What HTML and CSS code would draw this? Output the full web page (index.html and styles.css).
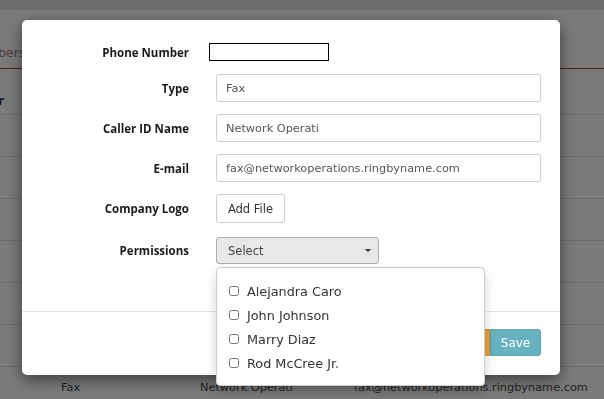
FILE: index.html
```html
<!DOCTYPE html>
<html lang="en">
  <head>
    <meta charset="UTF-8" />
    <title>Edit Number</title>
    <link rel="stylesheet" href="styles.css">
  </head>
  <body>
    <div class="page">
      <div class="topbar"></div>
      <div class="tabs"><span class="tab">bers</span></div>
      <div class="thead"><span class="th">r</span></div>
      <div class="row"></div>
      <div class="row"></div>
      <div class="row"></div>
      <div class="row"></div>
      <div class="row"></div>
      <div class="row"></div>
      <div class="row last">
        <span class="cell c1">Fax</span>
        <span class="cell c2">Network Operati</span>
        <span class="cell c3">fax@networkoperations.ringbyname.com</span>
      </div>
    </div>

    <div class="overlay"></div>

    <div class="modal">
      <div class="modal-body">
        <div class="field phone">
          <label class="label">Phone Number</label>
          <input class="phone-input" type="text">
        </div>
        <div class="field">
          <label class="label">Type</label>
          <input class="input" type="text" value="Fax">
        </div>
        <div class="field">
          <label class="label">Caller ID Name</label>
          <input class="input" type="text" value="Network Operati">
        </div>
        <div class="field">
          <label class="label">E-mail</label>
          <input class="input" type="text" value="fax@networkoperations.ringbyname.com">
        </div>
        <div class="field logo">
          <label class="label">Company Logo</label>
          <button class="btn-file">Add File</button>
        </div>
        <div class="field">
          <label class="label">Permissions</label>
          <div class="select-wrap">
            <button class="select">Select <span class="caret"></span></button>
            <ul class="dropdown">
              <li><input type="checkbox"> Alejandra Caro</li>
              <li><input type="checkbox"> John Johnson</li>
              <li><input type="checkbox"> Marry Diaz</li>
              <li><input type="checkbox"> Rod McCree Jr.</li>
            </ul>
          </div>
        </div>
      </div>
      <div class="modal-footer">
        <button class="btn cancel">Cancel</button>
        <button class="btn save">Save</button>
      </div>
    </div>
  </body>
</html>
```

FILE: styles.css
```css
body {
  margin: 0;
  font-family: "DejaVu Sans", sans-serif;
  background-color: #fff;
  overflow: hidden;
}
.page {
  width: 604px;
  height: 399px;
}
.topbar {
  height: 10px;
  background-color: #e4e4e4;
}
.tabs {
  height: 58px;
  border-bottom: 1px solid #b03a2e;
  font-size: 12.5px;
  color: #9a8282;
  line-height: 86px;
}
.tab {
  margin-left: -2px;
}
.thead {
  height: 45px;
  border-bottom: 1px solid #ddd;
  font-size: 12px;
  font-weight: bold;
  color: #333;
  line-height: 64px;
}
.th {
  margin-left: -2px;
}
.row {
  height: 41px;
  border-bottom: 1px solid #ddd;
}
.row.last {
  border-bottom: none;
  position: relative;
  font-size: 11.3px;
  color: #444;
  line-height: 42px;
}
.cell {
  position: absolute;
  top: 0;
}
.c1 { left: 61px; }
.c2 { left: 200px; }
.c3 { left: 354px; }

.overlay {
  position: fixed;
  inset: 0;
  background-color: rgba(0, 0, 0, 0.52);
}

.modal {
  position: fixed;
  left: 22px;
  top: 20px;
  width: 538px;
  height: 355px;
  background-color: #fff;
  border-radius: 5px;
  box-shadow: 0 5px 15px rgba(0, 0, 0, 0.5);
}
.modal-body {
  padding: 23px 19px 0 0;
  height: 268px;
  border-bottom: 1px solid #e5e5e5;
}
.field {
  display: flex;
  align-items: center;
  margin-bottom: 12px;
}
.field.phone {
  margin-bottom: 13px;
}
.field.logo {
  margin-bottom: 14px;
}
.label {
  width: 167px;
  text-align: right;
  font-family: "Open Sans", sans-serif;
  font-size: 11.5px;
  font-weight: bold;
  color: #1a1a1a;
}
.phone-input {
  margin-left: 20px;
  width: 116px;
  height: 14px;
  border: 1px solid #000;
  padding: 1px;
}
.input {
  margin-left: 27px;
  flex: 1;
  height: 28px;
  box-sizing: border-box;
  border: 1px solid #ccc;
  border-radius: 3px;
  padding: 0 9px;
  font-family: inherit;
  font-size: 11.3px;
  color: #555;
}
.btn-file {
  margin-left: 27px;
  height: 29px;
  width: 69px;
  background-color: #fff;
  border: 1px solid #ccc;
  border-radius: 3px;
  font-family: inherit;
  font-size: 11.5px;
  color: #333;
}
.select-wrap {
  margin-left: 27px;
  position: relative;
}
.select {
  display: flex;
  align-items: center;
  justify-content: space-between;
  width: 163px;
  height: 27px;
  padding: 0 7px 0 11px;
  background-color: #e8e8e8;
  border: 1px solid #adadad;
  border-radius: 3px;
  font-family: inherit;
  font-size: 11.5px;
  color: #444;
}
.caret {
  width: 0;
  height: 0;
  border-left: 3px solid transparent;
  border-right: 3px solid transparent;
  border-top: 3px solid #333;
}
.dropdown {
  position: absolute;
  top: 30px;
  left: 0;
  width: 269px;
  height: 119px;
  box-sizing: border-box;
  margin: 0;
  padding: 11px 0 0 12px;
  list-style: none;
  background-color: #fff;
  border: 1px solid #ccc;
  border-radius: 4px;
  box-shadow: 0 6px 12px rgba(0, 0, 0, 0.175);
  font-size: 12.8px;
  color: #333;
}
.dropdown li {
  display: flex;
  align-items: center;
  height: 24px;
}
.dropdown input {
  width: 10px;
  height: 10px;
  margin: 0 8px 0 0;
}
.modal-footer {
  display: flex;
  justify-content: flex-end;
  padding: 17px 19px 0 0;
}
.btn {
  height: 27px;
  border-radius: 3px;
  font-family: inherit;
  font-size: 12px;
  color: #fff;
}
.cancel {
  background-color: #e8a23e;
  border: 1px solid #d6902c;
  border-radius: 3px 0 0 3px;
  width: 60px;
}
.save {
  background-color: #67b1c3;
  border: 1px solid #5aa3b5;
  border-radius: 0 3px 3px 0;
  width: 51px;
}
```
